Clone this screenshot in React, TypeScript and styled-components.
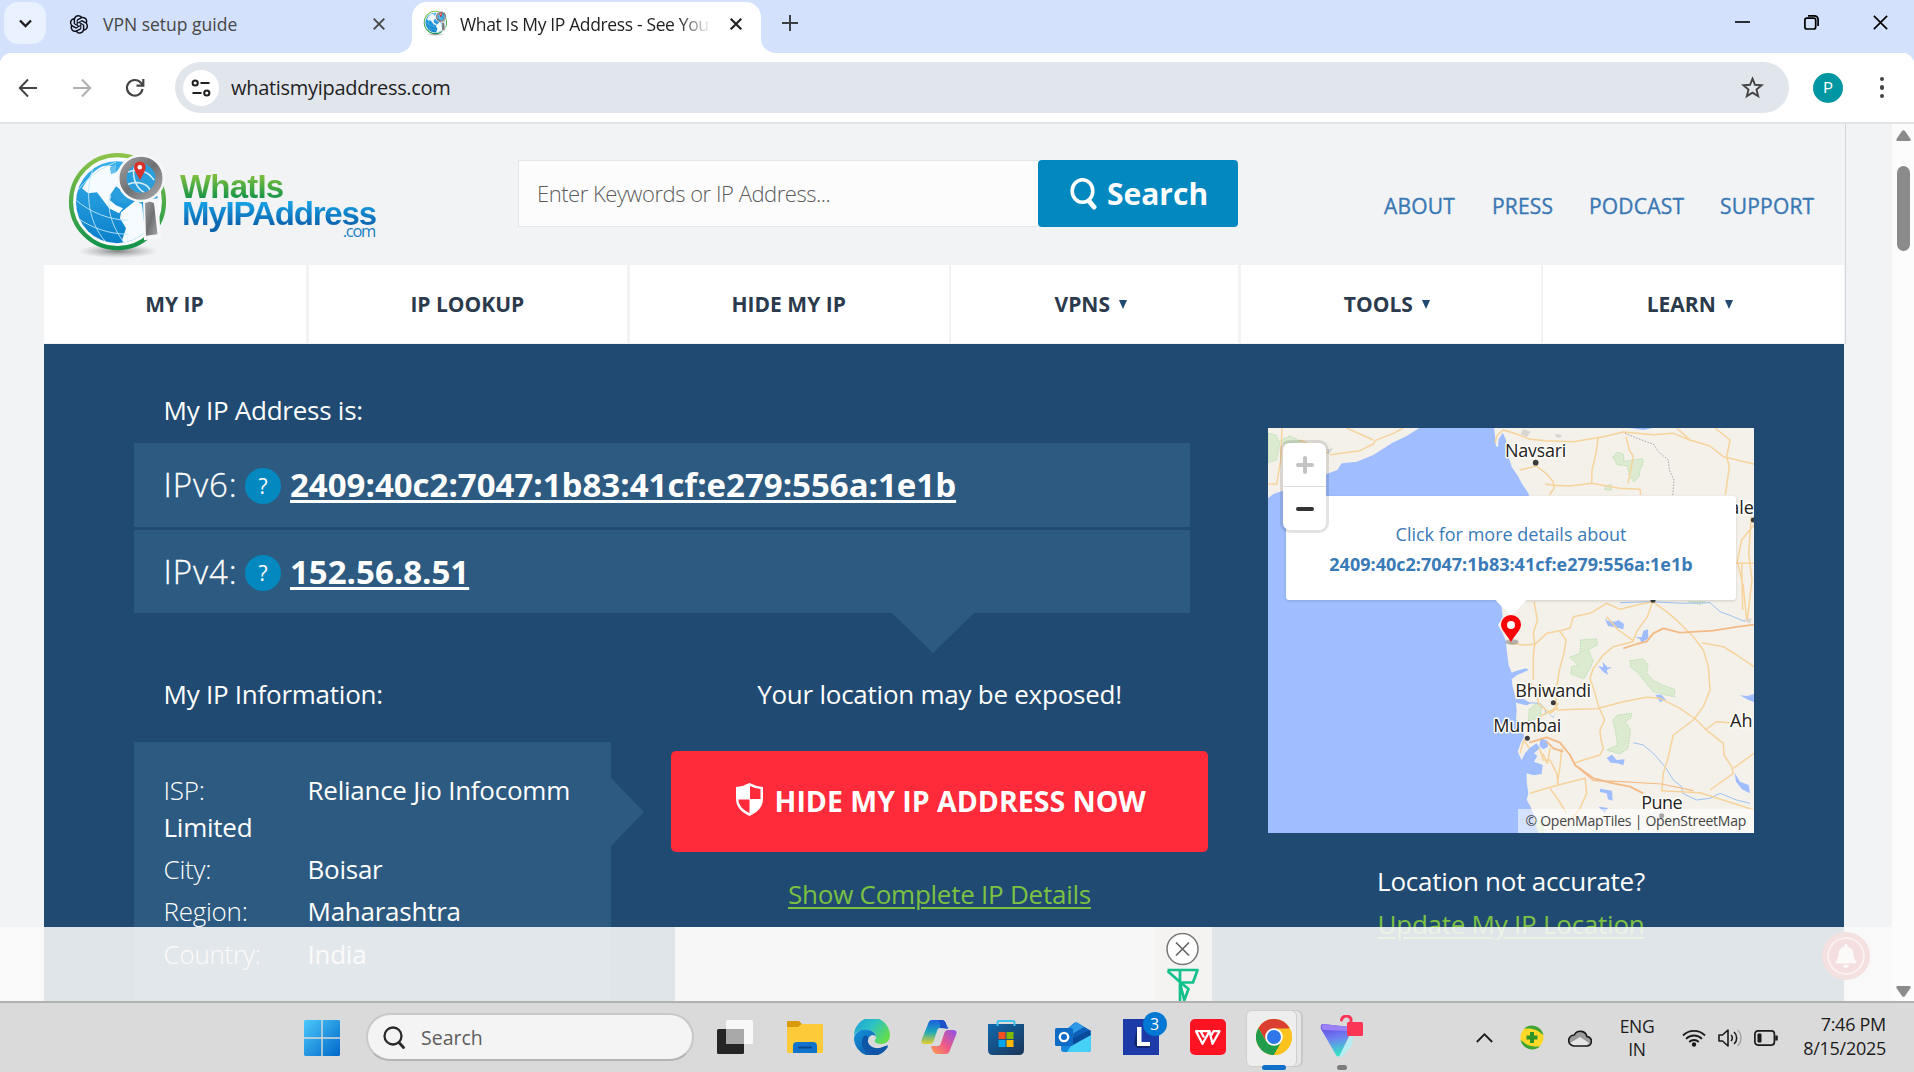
import React from "react";
import styled, { createGlobalStyle } from "styled-components";
import { AiOutlineOpenAI } from "react-icons/ai";
import { FaBell } from "react-icons/fa";

const ui = `"Open Sans", "Noto Sans", sans-serif`;

const GlobalStyle = createGlobalStyle`
  *, *::before, *::after { box-sizing: border-box; }
  body { margin: 0; font-family: ${ui}; overflow: hidden; }
  a { color: inherit; text-decoration: none; }
  svg { display: block; flex: none; }
`;

const Screen = styled.div`
  width: 1914px;
  height: 1072px;
  display: flex;
  flex-direction: column;
  overflow: hidden;
  background: #fff;
`;

/* ---------- browser chrome ---------- */

const TabStrip = styled.div`
  height: 53px;
  background: #d3e1fc;
  display: flex;
  align-items: flex-start;
  padding: 2px 26px 0 4px;
  flex: none;
`;

const TabSearch = styled.button`
  width: 42px;
  height: 42px;
  border: 0;
  padding: 0;
  border-radius: 14px;
  background: #e9f0fe;
  display: flex;
  align-items: center;
  justify-content: center;
`;

const Tab = styled.div<{ $active?: boolean }>`
  position: relative;
  height: 51px;
  width: 349px;
  margin-left: ${(p) => (p.$active ? 0 : 17)}px;
  padding: 0 ${(p) => (p.$active ? 19 : 27)}px 8px ${(p) => (p.$active ? 11 : 4)}px;
  display: flex;
  align-items: center;
  border-radius: 15px 15px 0 0;
  background: ${(p) => (p.$active ? "#fff" : "transparent")};
  color: ${(p) => (p.$active ? "#1f1f1f" : "#474747")};
  &::before,
  &::after {
    content: "";
    display: ${(p) => (p.$active ? "block" : "none")};
    position: absolute;
    bottom: 0;
    width: 14px;
    height: 14px;
  }
  &::before {
    left: -14px;
    background: radial-gradient(circle at 0 0, transparent 13.5px, #fff 14px);
  }
  &::after {
    right: -14px;
    background: radial-gradient(circle at 100% 0, transparent 13.5px, #fff 14px);
  }
`;

const TabTitle = styled.span<{ $gap: number; $fade?: boolean; $ls?: number }>`
  margin-left: ${(p) => p.$gap}px;
  margin-right: ${(p) => (p.$fade ? 19 : 0)}px;
  flex: 1;
  overflow: hidden;
  white-space: nowrap;
  font-size: 17.5px;
  line-height: 28px;
  letter-spacing: ${(p) => p.$ls ?? 0}px;
  ${(p) => (p.$fade ? "mask-image: linear-gradient(90deg, #000 87%, transparent);" : "")}
`;

const NewTab = styled.div`
  height: 42px;
  margin-left: 21px;
  display: flex;
  align-items: center;
`;

const WindowButtons = styled.div`
  margin-left: auto;
  height: 41px;
  display: flex;
  align-items: center;
  gap: 54px;
`;

const Toolbar = styled.div`
  height: 71px;
  flex: none;
  padding: 0 26px 0 18px;
  display: flex;
  align-items: center;
  border-bottom: 2px solid #e1e3e5;
  background:
    radial-gradient(circle at 12px 12px, #fff 12px, #d3e1fc 12.5px) 0 0 / 12px 12px no-repeat,
    radial-gradient(circle at 0 12px, #fff 12px, #d3e1fc 12.5px) 100% 0 / 12px 12px no-repeat,
    #fff;
`;

const NavIcons = styled.div`
  display: flex;
  align-items: center;
  width: 157px;
  gap: 33.5px;
`;

const Omnibox = styled.div`
  width: 1614px;
  height: 51px;
  border-radius: 26px;
  background: #e1e5ec;
  display: flex;
  align-items: center;
  padding: 0 25px 0 8px;
`;

const SiteInfo = styled.div`
  width: 36px;
  height: 36px;
  border-radius: 50%;
  background: #fff;
  display: flex;
  align-items: center;
  justify-content: center;
`;

const Address = styled.span`
  margin-left: 12px;
  flex: 1;
  font-size: 20px;
  letter-spacing: -0.3px;
  color: #1f1f1f;
`;

const Avatar = styled.div`
  width: 30px;
  height: 30px;
  margin-left: 24px;
  border-radius: 50%;
  background: #0097a3;
  color: #fff;
  font: 15px/30px Roboto, sans-serif;
  text-align: center;
`;

const Dots = styled.div`
  margin-left: auto;
  width: 12px;
  display: flex;
  flex-direction: column;
  align-items: center;
  gap: 4px;
  i {
    width: 4.4px;
    height: 4.4px;
    border-radius: 50%;
    background: #444;
  }
`;

/* ---------- web page ---------- */

const Viewport = styled.div`
  position: relative;
  height: 877px;
  flex: none;
  display: flex;
  overflow: hidden;
  background: #f1f3f5;
`;

const Site = styled.div`
  width: 1846px;
  padding-left: 44px;
  flex: none;
`;

const Masthead = styled.div`
  border-right: 1px solid #d0d4d8;
`;

const Header = styled.header`
  height: 141px;
  display: flex;
`;

const Brand = styled.div`
  width: 474px;
  padding: 26px 0 0 22px;
  display: flex;
`;

const BrandName = styled.div`
  margin-left: 10px;
  padding-top: 18px;
  width: 200px;
  font-family: "Liberation Sans", sans-serif;
  font-weight: 700;
  display: flex;
  flex-direction: column;
`;

const BrandLine = styled.span<{ $from: string; $to: string; $ls: number; $indent?: number }>`
  font-size: 33px;
  line-height: 38px;
  height: 27px;
  letter-spacing: ${(p) => p.$ls}px;
  margin-left: ${(p) => p.$indent ?? 0}px;
  white-space: nowrap;
  span {
    display: block;
    width: max-content;
    background: linear-gradient(${(p) => p.$from} 20%, ${(p) => p.$to} 80%);
    background-clip: text;
    -webkit-background-clip: text;
    color: transparent;
  }
`;

const BrandSuffix = styled.span`
  align-self: flex-end;
  margin: -1px 5px 0 0;
  font: 16.5px/20px ${ui};
  letter-spacing: -1.3px;
  color: #1b80c4;
`;

const SearchForm = styled.form`
  display: flex;
  width: 720px;
  height: 67px;
  margin-top: 36px;
`;

const SearchInput = styled.div`
  flex: 1;
  border: 1.5px solid #e3e6e8;
  border-right: 0;
  background: #fcfcfc;
  padding-left: 18px;
  font-size: 22px;
  font-weight: 300;
  letter-spacing: -0.47px;
  line-height: 64px;
  color: #5c5c5c;
`;

const SearchButton = styled.button`
  width: 200px;
  border: 0;
  border-radius: 4px;
  padding: 0 0 1px 32px;
  background: #0388bf;
  color: #fff;
  display: flex;
  align-items: center;
  font: 700 30px ${ui};
  svg { margin: 1px 10px 0 0; }
`;

const HeaderLinks = styled.nav`
  display: flex;
  margin: 66px 0 0 146px;
  gap: 37px;
  font-size: 21px;
  font-weight: 500;
  -webkit-text-stroke: 0.35px #3a78b4;
  line-height: 33px;
  height: 33px;
  color: #3a78b4;
`;

const HeaderLink = styled.a<{ $w: number }>`
  width: ${(p) => p.$w}px;
  letter-spacing: 0.2px;
  white-space: nowrap;
`;

const MainNav = styled.nav`
  width: 1800px;
  height: 79px;
  padding-bottom: 1px;
  display: flex;
  gap: 2.6px;
`;

const NavItem = styled.a<{ $w: number; $drop: boolean }>`
  flex: 0 1 ${(p) => p.$w}px;
  background: #fff;
  display: flex;
  align-items: center;
  justify-content: center;
  padding-right: ${(p) => (p.$drop ? 8 : 1)}px;
  font-size: 21px;
  font-weight: 700;
  letter-spacing: 0;
  color: #2b3a4c;
`;

const Caret = styled.i`
  margin: 1px 0 0 9px;
  border: 4.5px solid transparent;
  border-top: 9px solid #204a72;
  border-bottom: 0;
`;

const Hero = styled.main`
  width: 1800px;
  height: 740px;
  background: #204a72;
  color: #fff;
  padding: 48px 90px 0;
  display: flex;
  justify-content: space-between;
`;

const HeroMain = styled.section`
  width: 1074px;
`;

const Heading = styled.h2<{ $indent?: boolean; $after: number; $ls?: number }>`
  margin: 0 0 ${(p) => p.$after}px ${(p) => (p.$indent ? 29.5 : 0)}px;
  font-size: 26px;
  line-height: 36px;
  font-weight: 400;
  letter-spacing: ${(p) => p.$ls ?? -0.25}px;
`;

const Addresses = styled.div`
  position: relative;
  width: 1056px;
  display: flex;
  flex-direction: column;
  gap: 3px;
  margin-bottom: 63px;
  &::after {
    content: "";
    position: absolute;
    top: 100%;
    left: 758px;
    border: 41px solid transparent;
    border-top: 40px solid #2d5a80;
    border-bottom: 0;
  }
`;

const AddressRow = styled.div<{ $h: number }>`
  height: ${(p) => p.$h}px;
  background: #2d5a80;
  padding: 0 30px;
  display: flex;
  align-items: center;
  font-size: 33px;
  line-height: 44px;
`;

const Version = styled.span`
  width: 81.5px;
  font-weight: 300;
  letter-spacing: 0.9px;
  -webkit-text-stroke: 0.3px #fff;
  margin-left: -0.5px;
`;

const Help = styled.span`
  width: 36px;
  height: 36px;
  margin: 2px 9px 0 0;
  border-radius: 50%;
  background: #0388bf;
  font-size: 21px;
  line-height: 36px;
  text-align: center;
`;

const IpLink = styled.a`
  font-weight: 700;
  letter-spacing: 0;
  text-decoration: underline;
  text-decoration-thickness: 3px;
  text-underline-offset: 3px;
  text-decoration-skip-ink: none;
`;

const Columns = styled.div`
  display: flex;
  justify-content: space-between;
`;

const InfoColumn = styled.div`
  width: 477px;
`;

const InfoBox = styled.div`
  position: relative;
  height: 330px;
  padding: 29.6px 30px 0 29.5px;
  background: #2d5a80;
  font-size: 26px;
  line-height: 37px;
  &::after {
    content: "";
    position: absolute;
    left: 100%;
    top: 36px;
    border: 34px solid transparent;
    border-left: 33px solid #2d5a80;
    border-right: 0;
  }
`;

const InfoRow = styled.p`
  margin: 0 0 5.4px;
  letter-spacing: -0.25px;
  b {
    display: inline-block;
    width: 144px;
    font-weight: 300;
  }
`;

const ActionColumn = styled.div`
  width: 537px;
  text-align: center;
`;

const HideButton = styled.button`
  width: 100%;
  height: 101px;
  border: 0;
  border-radius: 5px;
  padding: 0 0 2px 3px;
  background: #ff2a3a;
  color: #fff;
  display: flex;
  align-items: center;
  justify-content: center;
  font: 700 28.5px ${ui};
  letter-spacing: 0;
  svg { margin: 0 11.5px 3px 0; }
`;

const GreenLink = styled.a<{ $top: number; $ls: number }>`
  display: block;
  margin-top: ${(p) => p.$top}px;
  font-size: 26px;
  line-height: 36px;
  letter-spacing: ${(p) => p.$ls}px;
  color: #7cc142;
  text-decoration: underline;
  text-decoration-thickness: 2px;
  text-underline-offset: 3px;
`;

const MapColumn = styled.aside`
  width: 486px;
  padding-top: 36px;
  text-align: center;
`;

const MapFrame = styled.div`
  position: relative;
  width: 486px;
  height: 405px;
  overflow: hidden;
  margin-bottom: 30px;
`;

const Popup = styled.div`
  position: absolute;
  left: 18px;
  top: 68px;
  width: 450px;
  height: 104px;
  padding-top: 23px;
  border-radius: 3px;
  background: #fff;
  box-shadow: 0 1px 3px rgba(0, 0, 0, 0.15);
  color: #3a7ab7;
  font-size: 18px;
  line-height: 30px;
  white-space: nowrap;
  &::after {
    content: "";
    position: absolute;
    left: 210px;
    top: 100%;
    border: 15px solid transparent;
    border-top: 14px solid #fff;
    border-bottom: 0;
  }
  strong { display: block; letter-spacing: 0; }
`;

const ZoomBox = styled.div`
  position: absolute;
  left: 15px;
  top: 15px;
  width: 43px;
  height: 87px;
  border-radius: 7px;
  background: #fff;
  box-shadow: 0 0 0 3px rgba(0, 0, 0, 0.11);
  display: flex;
  flex-direction: column;
`;

const ZoomKey = styled.div<{ $tone: string; $line?: boolean }>`
  flex: 1;
  display: flex;
  align-items: center;
  justify-content: center;
  color: ${(p) => p.$tone};
  border-bottom: ${(p) => (p.$line ? "1px solid #ddd" : "0")};
`;

const Attribution = styled.div`
  position: absolute;
  right: 0;
  bottom: 0;
  width: 236px;
  height: 24px;
  padding-right: 8px;
  background: rgba(255, 255, 255, 0.55);
  color: #444;
  font-size: 14px;
  line-height: 24px;
  letter-spacing: -0.26px;
  text-align: right;
  white-space: nowrap;
`;

const AdOverlay = styled.div`
  position: absolute;
  left: 0;
  bottom: 0;
  width: 1892px;
  height: 74px;
  padding-left: 675px;
  background: rgba(249, 249, 249, 0.885);
`;

const AdCard = styled.div`
  width: 537px;
  height: 74px;
  background: linear-gradient(90deg, #f7f7f7 480px, #f5f3f1 480px);
  display: flex;
  flex-direction: column;
  align-items: flex-end;
  padding: 6px 13.5px 0 0;
`;

const Bell = styled.div`
  position: absolute;
  left: 1822px;
  bottom: 21px;
  width: 48px;
  height: 48px;
  border: 5px solid #f5e0e0;
  border-radius: 50%;
  background: #f4dedf;
  box-shadow: inset 0 0 0 2px #fbf1f1;
  color: #fcf9f9;
  display: flex;
  align-items: center;
  justify-content: center;
`;

const Scrollbar = styled.div`
  margin-left: auto;
  width: 22px;
  background: #fcfcfc;
  display: flex;
  flex-direction: column;
  align-items: center;
  padding: 6px 0 4px 1px;
`;

const Thumb = styled.div`
  width: 13px;
  height: 85px;
  margin: 25px 0 auto;
  border-radius: 7px;
  background: #8b8b8b;
`;

/* ---------- taskbar ---------- */

const Taskbar = styled.footer`
  height: 71px;
  flex: none;
  border-top: 2px solid #b0b2b1;
  background: #dadada;
  display: flex;
  align-items: center;
  padding: 0 28px 0 304px;
`;

const SearchPill = styled.div`
  width: 328px;
  height: 48px;
  margin: -1px 23px 0 26px;
  border-radius: 24px;
  border: 2px solid #c8c8c8;
  border-bottom-color: #b4b4b4;
  background: #f4f4f4;
  display: flex;
  align-items: center;
  gap: 16px;
  padding-left: 15px;
  font-size: 19.5px;
  letter-spacing: 0;
  color: #5e5e5e;
`;

const Apps = styled.div`
  display: flex;
  align-items: center;
  gap: 31.2px;
  margin-top: -1px;
  & > :first-child { margin-right: 2.5px; }
  & > :nth-child(8) { margin-right: -1px; }
  & > :last-child { margin-left: 1px; }
`;

const AppSlot = styled.div`
  position: relative;
  width: 36px;
  height: 66px;
  display: flex;
  align-items: center;
  justify-content: center;
`;

const ActiveTile = styled.div`
  position: absolute;
  left: -10px;
  top: 6px;
  width: 51px;
  height: 57px;
  border: 1px solid #cfcfcf;
  border-radius: 6px;
  background: #eeeeee;
  box-shadow: 5px 0 0 -1px #e6e6e6, 6px 0 0 0 #c9c9c9;
`;

const AppIcon = styled.div`
  position: relative;
`;

const RunMark = styled.i<{ $w: number; $c: string }>`
  position: absolute;
  bottom: 0;
  left: ${(p) => 18 - p.$w / 2}px;
  width: ${(p) => p.$w}px;
  height: 5px;
  border-radius: 3px;
  background: ${(p) => p.$c};
`;

const Count = styled.span`
  position: absolute;
  left: 20px;
  top: 8px;
  width: 24px;
  height: 24px;
  border-radius: 50%;
  background: #0078d4;
  color: #fff;
  font-size: 16px;
  line-height: 24px;
  text-align: center;
`;

const Tray = styled.div`
  margin-left: auto;
  display: flex;
  align-items: center;
  color: #1b1b1b;
  line-height: 23px;
`;

const TrayItem = styled.div<{ $gap: number }>`
  margin-left: ${(p) => p.$gap}px;
`;

const Language = styled.div`
  width: 40px;
  margin-left: 25px;
  text-align: center;
  font-size: 17.5px;
  letter-spacing: -0.3px;
  div { height: 22.5px; }
`;

const Clock = styled.div`
  width: 92px;
  margin: -2px 0 0 16px;
  text-align: right;
  font-size: 18px;
  letter-spacing: -0.28px;
  white-space: nowrap;
  div { height: 24px; }
`;

/* ---------- drawings ---------- */

const Cross = ({ size, w, color }: { size: number; w: number; color: string }) => (
  <svg width={size} height={size} viewBox="0 0 12 12" stroke={color} strokeWidth={w} fill="none">
    <path d="M.7 .7L11.3 11.3M11.3 .7L.7 11.3" />
  </svg>
);

const Globe = ({ size }: { size: number }) => (
  <svg width={size} height={size * 1.1} viewBox="0 0 104 114">
    <defs>
      <linearGradient id="ring" x1="0" y1="0" x2="0" y2="1">
        <stop offset="0" stopColor="#8cc34a" />
        <stop offset="1" stopColor="#12934a" />
      </linearGradient>
      <linearGradient id="sea" x1="0" y1="0" x2="0" y2="1">
        <stop offset="0" stopColor="#35b0ea" />
        <stop offset="1" stopColor="#0a7fcb" />
      </linearGradient>
      <linearGradient id="steel" x1="0" y1="0" x2="1" y2="1">
        <stop offset="0" stopColor="#9a9a9c" />
        <stop offset=".5" stopColor="#6f7073" />
        <stop offset="1" stopColor="#a5a5a7" />
      </linearGradient>
      <radialGradient id="shade">
        <stop offset="0" stopColor="#555" stopOpacity=".7" />
        <stop offset="1" stopColor="#888" stopOpacity="0" />
      </radialGradient>
      <clipPath id="ball">
        <circle cx="51" cy="52" r="41" />
      </clipPath>
    </defs>
    <ellipse cx="52" cy="101" rx="40" ry="7" fill="url(#shade)" />
    <circle cx="51.500" cy="51.500" r="46.500" fill="#f8fafb" stroke="url(#ring)" strokeWidth="4.200" />
    <circle cx="51" cy="52" r="41" fill="url(#sea)" />
    <g clipPath="url(#ball)">
      <path d="M24 26C32 16 40 14 46 16L44 20L50 22L58 12L66 28L62 40L58 44L52 38L46 42L44 50L50 55L57 58L53 63L43 58L37 50L31 42L22 43L16 38Z" fill="#f5fbff" />
      <path d="M44 17L50 14L50 22L45 24Z" fill="#66c0ec" />
      <path d="M60 58L70 50L76 54L80 90L70 90L60 98L56 90L60 78L54 68L55 62Z" fill="#f5fbff" />
      <path d="M44 45L50 36L58 42L66 46L60 53L50 51Z" fill="#2a9fdf" />
      <path d="M58 93C74 90 86 80 91 66L96 70L84 94L60 98Z" fill="#1687cf" />
      <path d="M10 50C24 62 44 70 62 70M12 68C26 78 44 84 62 84M30 12C18 34 20 70 40 92M12 40C26 22 40 16 50 12M44 44C40 60 48 80 58 92" fill="none" stroke="#bfe6fa" strokeWidth=".9" />
    </g>
    <circle cx="75" cy="28" r="24" fill="#f5f7f8" />
    <circle cx="75" cy="28" r="15" fill="#2a9ddd" />
    <path d="M62 22C70 18 82 20 88 30M62 34C72 30 82 34 84 40M70 14C64 24 70 38 78 42" fill="none" stroke="#d9f0fb" strokeWidth="1.500" />
    <circle cx="75" cy="28" r="18" fill="none" stroke="url(#steel)" strokeWidth="7" />
    <path d="M77 50L92 48L95 88L78 90Z" fill="#f5f7f8" />
    <path d="M79 53Q84 50 88 53L91.500 84L80 85.500Z" fill="url(#steel)" />
    <path d="M74 30C70 22 68 20 68 17A5.800 5.800 0 0 1 79.600 17C79.600 20 78 22 74 30Z" fill="#d8322a" />
    <circle cx="73.800" cy="17" r="2.300" fill="#fff" />
  </svg>
);

const MapArt = () => (
  <svg width="486" height="405" viewBox="24 24 1458 1215">
    <rect x="24" y="24" width="1458" height="1215" fill="#9fbdff" />
    <g fill="#f4f1ea">
      <path d="M24 24H478L440 48L395 70L340 105L290 125L245 130L232 150L200 162L150 190L60 215L40 222L24 235Z" />
      <path d="M702 24L705 50L708 78L714 82L716 58L728 38L738 60L742 100L755 140L775 170L785 190L805 220L815 260L790 400L735 500L720 540L726 570L728 590L714 615L728 640L738 665L740 690L746 735L755 758L770 752L798 745L806 750L770 766L755 778L758 800L766 830L770 870L768 900L790 930L792 950L782 970L773 995L785 1020L795 1000L808 985L830 970L840 985L822 1000L832 1008L822 1025L848 1035L845 1062L820 1066L800 1060L800 1085L805 1120L800 1140L812 1160L825 1200L835 1239H1482V24Z" />
    </g>
    <g fill="#dcebd0" stroke="#a5d6a0" strokeWidth="2" strokeDasharray="5 3">
      <path d="M24 40L48 45L60 70L50 120L24 128Z" />
      <path d="M62 60L90 48L125 65L70 70Z" />
      <path d="M1058 112L1072 96L1090 102L1092 124L1148 116L1150 128L1140 150L1138 168L1122 186L1108 168L1102 138L1072 134Z" />
      <path d="M1034 198L1054 194L1054 210L1036 210Z" />
      <path d="M962 660L1010 656L1012 675L985 690L1000 722L990 745L972 776L932 762L935 740L955 735L928 712L960 700Z" />
      <path d="M1110 722L1150 716L1164 735L1160 758L1180 782L1215 798L1244 808L1244 830L1220 826L1180 815L1160 792L1134 758L1112 742Z" />
      <path d="M1074 885L1116 880L1112 895L1096 906L1112 930L1104 985L1080 1002L1040 990L1072 975L1066 930L1058 900Z" />
      <path d="M808 868L830 850L845 858L842 890L820 900L804 905Z" />
      <path d="M1285 545L1335 545L1320 554Z" />
      <path d="M822 1205L850 1200L850 1239H835Z" />
    </g>
    <g fill="#9fbdff">
      <path d="M1034 594L1042 602L1065 605L1075 600L1092 612L1090 628L1066 622L1044 618Z" />
      <path d="M1125 650L1145 652L1150 632L1164 628L1165 655L1145 668L1140 658Z" />
      <path d="M1014 738L1030 742L1028 725L1042 742L1056 742L1040 750L1044 764L1030 756Z" />
      <path d="M1186 824L1204 824L1218 840L1200 846Z" />
      <path d="M1440 826L1462 828L1482 822V846L1465 840Z" />
      <path d="M1040 1014L1056 1004L1070 1020L1094 1018L1090 1036L1072 1030L1052 1028Z" />
      <path d="M1020 1106L1056 1112L1058 1142L1044 1138L1040 1120L1020 1116Z" />
      <path d="M1016 1160L1044 1164L1034 1180Z" />
      <path d="M1424 1058L1440 1085L1466 1095L1470 1120L1446 1108L1428 1085Z" />
      <path d="M766 838L790 836L812 850L800 856L768 848Z" />
      <path d="M842 955L862 962L864 980L850 988L838 978Z" />
      <path d="M862 880L880 890L888 876L880 893Z" />
      <path d="M1110 24H1180L1150 30Z" />
    </g>
    <g fill="none" stroke="#9dc3f2" strokeWidth="3">
      <path d="M800 848L840 850L856 868L856 885M1080 548L1170 545L1270 550L1350 548L1380 575L1420 590L1455 605M1120 968L1150 975L1180 1000L1215 1040L1240 1080L1265 1100L1268 1120L1310 1140L1350 1135L1380 1120L1430 1140L1470 1150" />
    </g>
    <path d="M1095 40L1150 62L1180 72L1195 95L1225 120L1228 150L1242 180L1238 230" fill="none" stroke="#aaa" strokeWidth="3" strokeDasharray="5 4" />
    <g fill="none" stroke="#f6d39b" strokeWidth="4.500" strokeLinejoin="round">
      <path d="M24 192H50L62 120L66 24M210 104L300 92L340 72L345 62L400 40L430 24M260 24L340 60M120 60L180 90L205 100" />
      <path d="M705 68L712 45L730 30L770 42L810 58L860 62L940 65L1030 50L1090 36L1180 44L1240 40L1290 60L1350 78L1390 110L1482 132" />
      <path d="M1015 50L1008 100L996 150L995 190L930 198L880 196L855 192M780 150L830 138L858 160L880 185L882 205L868 225M995 190L1080 205L1140 208L1142 225M1098 50L1108 90L1120 110L1104 190M1250 24L1290 60M1365 24L1410 60L1400 110L1408 140L1396 225" />
      <path d="M822 544L832 600L820 640L824 670L820 710L820 780M745 668L790 675L825 673L860 640L900 632L930 625L940 590L990 580L1040 550L1080 568L1130 555L1178 545M900 635L918 660L912 700L898 750L886 830L892 870" />
      <path d="M1178 545L1162 590L1130 635L1118 665L1060 680L1030 705L1000 745L990 775L1005 820L1016 860L1034 900L1020 930L1022 955L1030 985L1020 1005L970 1020L945 1028" />
      <path d="M1040 590L1075 630L1120 662M1182 548L1220 575L1255 605L1300 650L1330 690L1345 740L1350 810L1330 860L1300 900L1240 945L1225 1010L1210 1060L1205 1115" />
      <path d="M1325 668L1390 680L1430 705L1482 740M892 870L950 868L1010 866L1090 845L1160 832L1200 835L1260 865L1310 900L1345 935L1390 970L1392 1005L1415 1040L1420 1060L1350 1110M1335 930L1370 905L1410 908M1482 1000L1420 1045" />
      <path d="M1482 315L1445 360L1432 425L1450 500L1460 600M1474 290L1466 400L1476 480L1462 600M1410 430H1482M1445 430L1448 570" />
      <path d="M805 785L830 805L835 850L870 880L890 866M842 888L880 868L895 850M838 985L850 1020L870 1020L890 1060L895 1095L860 1105L810 1120M870 985L862 1030L848 1000M905 985L900 1040L892 1090M975 1072L980 1120L960 1165L910 1230M870 1105L895 1140L920 1180M895 1095L975 1075" />
      <path d="M780 1000L792 960L808 985M1482 1170L1420 1150L1320 1118L1205 1112" />
    </g>
    <g fill="none" stroke="#f4ba86" strokeWidth="5.500" strokeLinejoin="round">
      <path d="M808 968L860 952L900 968L930 1005L945 1035L1000 1075L1060 1090L1110 1100L1150 1120M860 965L880 985L910 995M1090 685L1130 672L1160 665L1180 640L1210 625L1260 638L1360 632L1420 622L1482 614" />
      <path d="M945 1035L1000 1082L1085 1085L1205 1092L1300 1112" strokeWidth="3.500" />
    </g>
    <g fill="#d8d6d2">
      <path d="M790 28L812 35L800 52L782 42ZM885 42L906 44L900 54L888 52ZM1448 600L1475 595L1470 610ZM200 88L220 85L205 104Z" />
    </g>
    <path d="M706 541H800L754 586Z" fill="#fff" />
    <ellipse cx="756" cy="666" rx="20" ry="8" fill="#777" opacity=".5" />
    <path d="M753 666C742 645 723 630 723 614A30 29 0 0 1 783 614C783 630 764 645 753 666Z" fill="#fb0006" />
    <circle cx="753" cy="615" r="12" fill="#fff" />
    <g fill="#3b3b3b">
      <circle cx="827" cy="128" r="8.500" />
      <circle cx="880" cy="848" r="7.500" />
      <circle cx="802" cy="955" r="7.500" />
      <circle cx="1205" cy="1187" r="7.500" />
      <circle cx="1179" cy="541" r="7.500" />
      <circle cx="1480" cy="300" r="7.500" />
    </g>
    <g fontFamily="Open Sans, Noto Sans, sans-serif" fontSize="54" fill="#222" stroke="#fffdf8" strokeWidth="9" strokeLinejoin="round" paintOrder="stroke">
      <text x="735" y="110" textLength="184">Navsari</text>
      <text x="766" y="830" textLength="227">Bhiwandi</text>
      <text x="700" y="936" textLength="204">Mumbai</text>
      <text x="1144" y="1167" textLength="124">Pune</text>
      <text x="1408" y="282">ale</text>
      <text x="1410" y="920">Ah</text>
    </g>
  </svg>
);

const StartLogo = () => (
  <svg width="36" height="36" viewBox="0 0 36 36">
    <defs>
      <linearGradient id="win" x1="0" y1="0" x2="1" y2="1">
        <stop offset="0" stopColor="#4cc8fb" />
        <stop offset="1" stopColor="#0067c8" />
      </linearGradient>
    </defs>
    <path d="M1 0H17.300V17.300H0V1ZM18.700 0H35L36 1V17.300H18.700ZM0 18.700H17.300V36H1L0 35ZM18.700 18.700H36V35L35 36H18.700Z" fill="url(#win)" />
  </svg>
);

const TaskView = () => (
  <svg width="36" height="36" viewBox="0 0 36 36">
    <rect x="0" y="10" width="27" height="25" rx="1.500" fill="#252525" />
    <rect x="9" y="1" width="27" height="24" rx="1.500" fill="#f8f8f8" />
    <path d="M9 10H27V25H9Z" fill="#a9a9a9" />
  </svg>
);

const Explorer = () => (
  <svg width="36" height="36" viewBox="0 0 36 36">
    <path d="M0 3Q0 2 1 2H12L15 5L12 8H0Z" fill="#d99a0c" />
    <path d="M0 8H11L15 5H35Q36 5 36 6V33Q36 34 35 34H1Q0 34 0 33Z" fill="#fdcb3a" />
    <path d="M6 34V27Q6 23 10 23H26Q30 23 30 27V34Z" fill="#1173cc" />
    <rect x="11" y="27.500" width="14" height="2" rx="1" fill="#08488e" />
  </svg>
);

const Edge = () => (
  <svg width="36" height="36" viewBox="0 0 36 36">
    <defs>
      <linearGradient id="edgeTop" x1="0" y1="0" x2="1" y2=".6">
        <stop offset="0" stopColor="#1a9fd8" />
        <stop offset=".5" stopColor="#2cc1c6" />
        <stop offset="1" stopColor="#62dd4e" />
      </linearGradient>
      <linearGradient id="edgeLow" x1="0" y1="0" x2="1" y2="1">
        <stop offset="0" stopColor="#1593dd" />
        <stop offset="1" stopColor="#0b4a99" />
      </linearGradient>
    </defs>
    <path d="M0 17A18 18 0 0 1 36 16C36 22 32 25 27 25C22 25 20 23 21 21C24 18 21 12 15 11C8 10 2 12 0 17Z" fill="url(#edgeTop)" />
    <path d="M0 19C1 12 9 9 15 11C19 12 22 15 22 18C21 15 15 15 14 21C13 27 20 31 26 29L33 26.500C35 26 33.500 28 33 29A18 18 0 0 1 0 19Z" fill="url(#edgeLow)" />
    <path d="M10 17C5 24 9 34 19 36C26 36 31 32 33.500 28C33 26 31 27.500 28 28.500C20 31 13 26 14 21C14.500 17 12 15 10 17Z" fill="#0f55a8" />
  </svg>
);

const Copilot = () => (
  <svg width="36" height="36" viewBox="0 0 36 36">
    <defs>
      <linearGradient id="coA" x1="0" y1="0" x2="0" y2="1">
        <stop offset="0" stopColor="#1b5fe0" />
        <stop offset=".5" stopColor="#1fa9b8" />
        <stop offset="1" stopColor="#e9cf2a" />
      </linearGradient>
      <linearGradient id="coB" x1="1" y1="0" x2="0" y2="1">
        <stop offset="0" stopColor="#8f52e8" />
        <stop offset=".55" stopColor="#ee5a86" />
        <stop offset="1" stopColor="#fba04b" />
      </linearGradient>
    </defs>
    <path d="M20 1H11Q8 1 7 5L1 20Q-1 25 4 25H9Q12 25 13 21L16 12Q17 8 22 9H28Q26 8 25 5Q24 1 20 1Z" fill="url(#coA)" />
    <path d="M16 35H25Q28 35 29 31L35 16Q37 11 32 11H27Q24 11 23 15L20 24Q19 28 14 27H10Q12 35 16 35Z" fill="url(#coB)" />
    <path d="M17 1H21Q24 1 25 5L27 10Q22 9 19 9Q20 4 17 1Z" fill="#1c4fc8" />
  </svg>
);

const Store = () => (
  <svg width="36" height="36" viewBox="0 0 36 36">
    <defs>
      <linearGradient id="bag" x1="0" y1="0" x2="1" y2="1">
        <stop offset="0" stopColor="#1168ac" />
        <stop offset="1" stopColor="#1b3558" />
      </linearGradient>
    </defs>
    <path d="M0 5H36V31Q36 36 31 36H5Q0 36 0 31Z" fill="url(#bag)" />
    <path d="M9.500 7V3.500Q9.500 2 11 2H25Q26.500 2 26.500 3.500V7" fill="none" stroke="#3fc0f0" strokeWidth="2" />
    <path d="M10.500 13H17.500V20H10.500Z" fill="#f25022" />
    <path d="M18.500 13H25.500V20H18.500Z" fill="#7fba00" />
    <path d="M10.500 21H17.500V28H10.500Z" fill="#00a4ef" />
    <path d="M18.500 21H25.500V28H18.500Z" fill="#ffb900" />
  </svg>
);

const Outlook = () => (
  <svg width="36" height="36" viewBox="0 0 36 36">
    <path d="M7 14L19 4Q21 2.500 23 4L36 12V30Q36 33 33 33H9Q6 33 6 30Z" fill="#1586dc" />
    <path d="M12 10L29 8L36 12L18 22Z" fill="#0d5fb8" />
    <path d="M10 12L22 3.500L29 8L14 17Z" fill="#2f9be8" />
    <path d="M18 24L36 13V30Q36 33 33 33H12Z" fill="#45d0f5" />
    <path d="M18 19L35 11L36 16L18 26Z" fill="#0a4a9b" />
    <rect x="0" y="9" width="18" height="18" rx="1.500" fill="#0f6cc6" />
    <circle cx="9" cy="18" r="4.200" fill="none" stroke="#fff" strokeWidth="2.300" />
  </svg>
);

const LApp = () => (
  <svg width="36" height="36" viewBox="0 0 36 36">
    <rect width="36" height="36" fill="#1d3ba8" />
    <path d="M11 25L14 8V26H28L26 29H14Z" fill="#0b1d50" opacity=".7" />
    <path d="M14 8H18.500V23H27V27H14Z" fill="#fff" />
  </svg>
);

const Wps = () => (
  <svg width="36" height="36" viewBox="0 0 36 36">
    <rect width="36" height="36" rx="5" fill="#fd1321" />
    <path d="M6 12.200H19.500L12.500 24.800ZM10.800 12.500L14 18.500M19.500 12.200L22.500 24.800L29.500 12.200H23.500L20.500 17.500" fill="none" stroke="#fff" strokeWidth="2.300" strokeLinejoin="round" />
  </svg>
);

const Chrome = () => (
  <svg width="36" height="36" viewBox="0 0 36 36">
    <circle cx="18" cy="18" r="18" fill="#fcc31e" />
    <path d="M18 18L33.600 9A18 18 0 0 0 2.400 9L10 22Z" fill="#db3f31" />
    <path d="M2.400 9A18 18 0 0 0 18 36L26 22L18 18L10.200 22.500Z" fill="#209c4c" />
    <path d="M18 9.500H33.900A18 18 0 0 1 18 36L25.500 22.500Z" fill="#fcc31e" />
    <circle cx="18" cy="18" r="8.800" fill="#fff" />
    <circle cx="18" cy="18" r="7" fill="#2f77e8" />
  </svg>
);

const VpnApp = () => (
  <svg width="44" height="44" viewBox="0 0 44 44">
    <defs>
      <linearGradient id="funnel" x1="0" y1="0" x2=".2" y2="1">
        <stop offset="0" stopColor="#5f3fe0" />
        <stop offset=".5" stopColor="#6f7ff0" />
        <stop offset="1" stopColor="#35e0c8" />
      </linearGradient>
    </defs>
    <path d="M18 42L34 14L32 30L22 42Z" fill="#b7ecf3" />
    <path d="M3 9L30 12Q33 13 31 17L20 40Q18 43 16 40L1 14Q0 9 3 9Z" fill="url(#funnel)" />
    <path d="M3 9L30 12L29 16L3 15Q0 11 3 9Z" fill="#9c82f6" />
    <rect x="27" y="7" width="16" height="14" rx="1.500" fill="#fb3556" />
    <path d="M21.500 5A5 5 0 0 1 31 4V8" fill="none" stroke="#fb3556" strokeWidth="3" strokeLinecap="round" />
  </svg>
);

const Shield = () => (
  <svg width="27" height="33" viewBox="0 0 27 33">
    <path d="M13.500 0Q20 3.500 27 4V16C27 25 20 30 13.500 33C7 30 0 25 0 16V4Q7 3.500 13.500 0Z" fill="#fff" />
    <path d="M14 3Q19 5.500 24.500 6V16H14Z" fill="#ff2a3a" />
    <path d="M2.500 16.500H13.500V30C7 27 2.500 22.500 2.500 16.500Z" fill="#ff2a3a" />
  </svg>
);

const links: [string, number][] = [["ABOUT", 71], ["PRESS", 60], ["PODCAST", 94], ["SUPPORT", 96]];
const menu: [string, number, boolean][] = [
  ["MY IP", 262, false],
  ["IP LOOKUP", 318.5, false],
  ["HIDE MY IP", 319, false],
  ["VPNS", 287, true],
  ["TOOLS", 300, true],
  ["LEARN", 300.5, true],
];
const info: [string, string][] = [
  ["ISP:", "Reliance Jio Infocomm Limited"],
  ["City:", "Boisar"],
  ["Region:", "Maharashtra"],
  ["Country:", "India"],
];

export default function App() {
  return (
    <Screen>
      <GlobalStyle />
      <TabStrip>
        <TabSearch>
          <svg width="13" height="9" viewBox="0 0 13 9" fill="none" stroke="#1f1f1f" strokeWidth="2.400">
            <path d="M1 1.500L6.500 7L12 1.500" />
          </svg>
        </TabSearch>
        <Tab>
          <AiOutlineOpenAI size={24} color="#0f0f1c" />
          <TabTitle $gap={12} $ls={0}>VPN setup guide</TabTitle>
          <Cross size={12} w={1.9} color="#474747" />
        </Tab>
        <Tab $active>
          <Globe size={25} />
          <TabTitle $gap={12} $ls={-0.36} $fade>What Is My IP Address - See You</TabTitle>
          <Cross size={12} w={2.1} color="#1f1f1f" />
        </Tab>
        <NewTab>
          <svg width="16" height="16" viewBox="0 0 16 16" stroke="#3c4043" strokeWidth="2">
            <path d="M8 0V16M0 8H16" />
          </svg>
        </NewTab>
        <WindowButtons>
          <svg width="15" height="15" viewBox="0 0 15 15" stroke="#000" strokeWidth="1.600">
            <path d="M0 7H15" />
          </svg>
          <svg width="15" height="15" viewBox="0 0 15 15" fill="none" stroke="#000" strokeWidth="1.700">
            <rect x=".9" y="3.200" width="10.800" height="10.800" rx="2" />
            <path d="M4 .9H10.500A3.600 3.600 0 0 1 14.100 4.500V11" />
          </svg>
          <Cross size={15} w={1.3} color="#000" />
        </WindowButtons>
      </TabStrip>

      <Toolbar>
        <NavIcons>
          <svg width="20" height="20" viewBox="0 0 20 20" fill="none" stroke="#444" strokeWidth="2">
            <path d="M19 10H2M10 1.500L1.800 10L10 18.500" />
          </svg>
          <svg width="20" height="20" viewBox="0 0 20 20" fill="none" stroke="#b0b0b0" strokeWidth="2">
            <path d="M1 10H18M10 1.500L18.200 10L10 18.500" />
          </svg>
          <svg width="20" height="20" viewBox="0 0 20 20" fill="none" stroke="#444" strokeWidth="2.200">
            <path d="M17.500 11A7.800 7.800 0 1 1 15.800 4.800L18 7" />
            <path d="M18.300 1V7.600H11.500" />
          </svg>
        </NavIcons>
        <Omnibox>
          <SiteInfo>
            <svg width="20" height="18" viewBox="0 0 20 18" fill="none" stroke="#1f1f1f" strokeWidth="2">
              <circle cx="4.200" cy="4" r="2.600" />
              <circle cx="15.800" cy="14" r="2.600" />
              <path d="M9.500 4H18.500M1.500 14H10.500" />
            </svg>
          </SiteInfo>
          <Address>whatismyipaddress.com</Address>
          <svg width="23" height="23" viewBox="0 0 24 24" fill="none" stroke="#444" strokeWidth="2">
            <path d="M12 2.800L14.600 9.200L21.500 9.700L16.200 14.200L17.900 21L12 17.300L6.100 21L7.800 14.200L2.500 9.700L9.400 9.200Z" />
          </svg>
        </Omnibox>
        <Avatar>P</Avatar>
        <Dots>
          <i />
          <i />
          <i />
        </Dots>
      </Toolbar>

      <Viewport>
        <Site>
          <Masthead>
            <Header>
              <Brand>
                <Globe size={104} />
                <BrandName>
                  <BrandLine $from="#7fbf3f" $to="#159447" $ls={-0.8}>
                    <span>WhatIs</span>
                  </BrandLine>
                  <BrandLine $from="#17a0e3" $to="#0c63ae" $ls={-1.15} $indent={2}>
                    <span>MyIPAddress</span>
                  </BrandLine>
                  <BrandSuffix>.com</BrandSuffix>
                </BrandName>
              </Brand>
              <SearchForm>
                <SearchInput>Enter Keywords or IP Address...</SearchInput>
                <SearchButton type="button">
                  <svg width="27" height="32" viewBox="0 0 27 32" fill="none" stroke="#fff" strokeLinecap="round">
                    <ellipse cx="12.500" cy="13" rx="10.300" ry="11.200" strokeWidth="3.600" />
                    <path d="M19 23L24 29" strokeWidth="5" />
                  </svg>
                  Search
                </SearchButton>
              </SearchForm>
              <HeaderLinks>
                {links.map(([t, w]) => (
                  <HeaderLink key={t} $w={w}>{t}</HeaderLink>
                ))}
              </HeaderLinks>
            </Header>
            <MainNav>
              {menu.map(([t, w, drop]) => (
                <NavItem key={t} $w={w} $drop={drop}>
                  {t}
                  {drop && <Caret />}
                </NavItem>
              ))}
            </MainNav>
          </Masthead>
          <Hero>
            <HeroMain>
              <Heading $indent $after={15}>My IP Address is:</Heading>
              <Addresses>
                <AddressRow $h={84}>
                  <Version>IPv6:</Version>
                  <Help>?</Help>
                  <IpLink>2409:40c2:7047:1b83:41cf:e279:556a:1e1b</IpLink>
                </AddressRow>
                <AddressRow $h={83}>
                  <Version>IPv4:</Version>
                  <Help>?</Help>
                  <IpLink>152.56.8.51</IpLink>
                </AddressRow>
              </Addresses>
              <Columns>
                <InfoColumn>
                  <Heading $indent $after={30}>My IP Information:</Heading>
                  <InfoBox>
                    {info.map(([k, v]) => (
                      <InfoRow key={k}>
                        <b>{k}</b>
                        {v}
                      </InfoRow>
                    ))}
                  </InfoBox>
                </InfoColumn>
                <ActionColumn>
                  <Heading $after={39}>Your location may be exposed!</Heading>
                  <HideButton>
                    <Shield />
                    HIDE MY IP ADDRESS NOW
                  </HideButton>
                  <GreenLink $top={24} $ls={-0.25}>Show Complete IP Details</GreenLink>
                </ActionColumn>
              </Columns>
            </HeroMain>
            <MapColumn>
              <MapFrame>
                <MapArt />
                <Popup>
                  Click for more details about
                  <strong>2409:40c2:7047:1b83:41cf:e279:556a:1e1b</strong>
                </Popup>
                <ZoomBox>
                  <ZoomKey $tone="#c4c4c4" $line>
                    <svg width="18" height="18" viewBox="0 0 18 18" stroke="currentColor" strokeWidth="4" strokeLinecap="round">
                      <path d="M9 2V16M2 9H16" />
                    </svg>
                  </ZoomKey>
                  <ZoomKey $tone="#333">
                    <svg width="18" height="18" viewBox="0 0 18 18" stroke="currentColor" strokeWidth="4" strokeLinecap="round">
                      <path d="M2 9H16" />
                    </svg>
                  </ZoomKey>
                </ZoomBox>
                <Attribution>© OpenMapTiles | OpenStreetMap</Attribution>
              </MapFrame>
              <Heading $after={0}>Location not accurate?</Heading>
              <GreenLink $top={7} $ls={-0.25}>Update My IP Location</GreenLink>
            </MapColumn>
          </Hero>
        </Site>
        <Scrollbar>
          <svg width="15" height="11" viewBox="0 0 15 11" fill="#8b8b8b">
            <path d="M6.200 .8Q7.500 -.5 8.800 .8L14.500 9Q15 11 13.500 11H1.500Q0 11 .5 9Z" />
          </svg>
          <Thumb />
          <svg width="15" height="11" viewBox="0 0 15 11" fill="#8b8b8b">
            <path d="M6.200 10.200Q7.500 11.500 8.800 10.200L14.500 2Q15 0 13.500 0H1.500Q0 0 .5 2Z" />
          </svg>
        </Scrollbar>
        <AdOverlay>
          <AdCard>
            <svg width="33" height="68" viewBox="0 0 33 68" fill="none">
              <circle cx="16.500" cy="16" r="15.500" fill="#fff" stroke="#777" strokeWidth="1.500" />
              <path d="M10 9.500L23 22.500M23 9.500L10 22.500" stroke="#666" strokeWidth="1.700" />
              <path d="M1.500 37H31.500L27 49.500H15.500M14 37V49L1.500 38M14 49V68M14 49L22.500 56L18 68M14.500 52L18.500 68" stroke="#12c08c" strokeWidth="2.700" strokeLinejoin="round" />
            </svg>
          </AdCard>
        </AdOverlay>
        <Bell>
          <FaBell size={24} />
        </Bell>
      </Viewport>

      <Taskbar>
        <StartLogo />
        <SearchPill>
          <svg width="22" height="23" viewBox="0 0 22 23" fill="none" stroke="#2a2a2a" strokeLinecap="round">
            <circle cx="10" cy="10" r="8.500" strokeWidth="2.300" />
            <path d="M16 16.500L20.500 21.500" strokeWidth="2.800" />
          </svg>
          Search
        </SearchPill>
        <Apps>
          {[TaskView, Explorer, Edge, Copilot, Store, Outlook].map((Icon, i) => (
            <AppSlot key={i}>
              <Icon />
            </AppSlot>
          ))}
          <AppSlot>
            <LApp />
            <Count>3</Count>
          </AppSlot>
          <AppSlot>
            <Wps />
          </AppSlot>
          <AppSlot>
            <ActiveTile />
            <AppIcon>
              <Chrome />
            </AppIcon>
            <RunMark $w={24} $c="#0f6fcb" />
          </AppSlot>
          <AppSlot>
            <VpnApp />
            <RunMark $w={10} $c="#7c7c7c" />
          </AppSlot>
        </Apps>
        <Tray>
          <TrayItem $gap={0}>
            <svg width="17" height="10" viewBox="0 0 17 10" fill="none" stroke="#1b1b1b" strokeWidth="1.800">
              <path d="M.8 9L8.500 1.300L16.200 9" />
            </svg>
          </TrayItem>
          <TrayItem $gap={27}>
            <svg width="24" height="25" viewBox="0 0 24 25">
              <circle cx="12" cy="12.500" r="11.500" fill="#ffd92a" />
              <path d="M4 3.500A12 12 0 0 1 23.500 10L20.500 8C15 3 9 3.500 4 3.500ZM20 21.500A12 12 0 0 1 .5 15L3.500 17C9 22 15 21.500 20 21.500Z" fill="#3fa535" />
              <path d="M12 7V18M6.500 12.500H17.500" stroke="#2e9428" strokeWidth="4" />
            </svg>
          </TrayItem>
          <TrayItem $gap={24}>
            <svg width="24" height="18" viewBox="0 0 24 18">
              <path d="M6 17H18.500A4.700 4.700 0 0 0 19 7.600A6.800 6.800 0 0 0 6.300 6A5.500 5.500 0 0 0 6 17Z" fill="#9b9b9b" />
              <path d="M2 14L12 8L21 14L18 17H6Z" fill="#e6e6e6" />
              <path d="M6 17H18.500A4.700 4.700 0 0 0 19 7.600A6.800 6.800 0 0 0 6.300 6A5.500 5.500 0 0 0 6 17Z" fill="none" stroke="#1b1b1b" strokeWidth="1.600" />
            </svg>
          </TrayItem>
          <Language>
            <div>ENG</div>
            <div>IN</div>
          </Language>
          <TrayItem $gap={25}>
            <svg width="24" height="19" viewBox="0 0 24 19" fill="none" stroke="#1b1b1b" strokeWidth="1.800">
              <path d="M1 7.500A15.500 15.500 0 0 1 23 7.500M4 10.800A11.300 11.300 0 0 1 20 10.800M7.200 14A6.800 6.800 0 0 1 16.800 14" />
              <circle cx="12" cy="16.500" r="1.300" fill="#1b1b1b" />
            </svg>
          </TrayItem>
          <TrayItem $gap={12}>
            <svg width="24" height="20" viewBox="0 0 24 20" fill="none" stroke="#1b1b1b" strokeWidth="1.600">
              <path d="M1 7V13H4.500L10 18V2L4.500 7Z" strokeLinejoin="round" />
              <path d="M13 7A4 4 0 0 1 13 13M16 4A8 8 0 0 1 16 16" />
              <path d="M19.500 2A11 11 0 0 1 19.500 18" stroke="#a8a8a8" />
            </svg>
          </TrayItem>
          <TrayItem $gap={12}>
            <svg width="24" height="16" viewBox="0 0 24 16" fill="none" stroke="#1b1b1b" strokeWidth="1.700">
              <rect x=".9" y=".9" width="19.500" height="14.200" rx="3" />
              <path d="M22.500 5.500V10.500" strokeWidth="2.500" />
              <rect x="3.500" y="3.500" width="4" height="9" rx="1" fill="#1b1b1b" stroke="none" />
            </svg>
          </TrayItem>
          <Clock>
            <div>7:46 PM</div>
            <div>8/15/2025</div>
          </Clock>
        </Tray>
      </Taskbar>
    </Screen>
  );
}
